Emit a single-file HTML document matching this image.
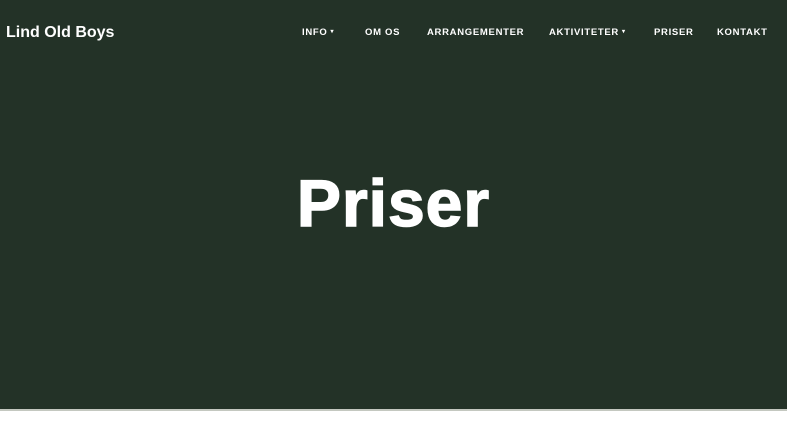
<!DOCTYPE html>
<html><head><style>
body{margin:0;width:787px;height:434px;background:#fff;font-family:"Liberation Sans",sans-serif;overflow:hidden}
.hero{position:absolute;left:0;top:0;width:787px;height:409px;background:#233227;border-bottom:2px solid #c4c8c0}
.brand{position:absolute;left:6px;top:24px;color:#fff;font-weight:bold;font-size:16px}
.nav span{position:absolute;top:27px;color:#fff;font-weight:bold;font-size:9.5px;letter-spacing:0.7px;white-space:nowrap}
.nav i{font-style:normal;font-size:6px;vertical-align:2px;margin-left:3px}
h1{position:absolute;left:0;width:787px;top:165px;margin:0;text-align:center;color:#fff;font-size:66px;font-weight:bold;letter-spacing:1px;-webkit-text-stroke:1.5px #fff}
</style></head><body>
<div class="hero">
<div class="brand">Lind Old Boys</div>
<div class="nav">
<span style="left:302px">INFO<i>▾</i></span>
<span style="left:365px">OM OS</span>
<span style="left:427px">ARRANGEMENTER</span>
<span style="left:549px">AKTIVITETER<i>▾</i></span>
<span style="left:654px">PRISER</span>
<span style="left:717px">KONTAKT</span>
</div>
<h1>Priser</h1>
</div>
</body></html>
